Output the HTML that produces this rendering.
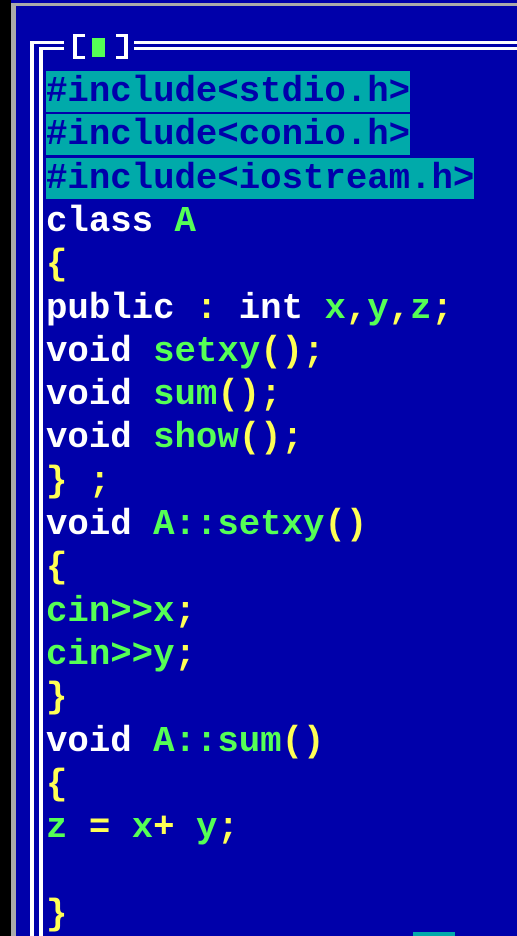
<!DOCTYPE html>
<html><head><meta charset="utf-8"><style>
html,body{margin:0;padding:0;}
body{width:517px;height:936px;background:#0000AA;position:relative;overflow:hidden;font-family:"Liberation Mono",monospace;}
.b{position:absolute;}
.r{position:absolute;left:46px;height:43.3px;line-height:43.3px;font-size:35.7px;font-weight:bold;white-space:pre;color:#fff;}
.h{background:#00AAAA;color:#0000AA;}
.g{color:#55FF55}.y{color:#FFFF55}.w{color:#fff}
</style></head><body>
<div class="b" style="left:0;top:0;width:11px;height:936px;background:#000"></div>
<div class="b" style="left:11px;top:3px;width:506px;height:3px;background:#aaa"></div>
<div class="b" style="left:11px;top:3px;width:5px;height:933px;background:#aaa"></div>
<div class="b" style="left:30px;top:41px;width:487px;height:3px;background:#fff"></div>
<div class="b" style="left:30px;top:41px;width:4px;height:895px;background:#fff"></div>
<div class="b" style="left:39px;top:47px;width:478px;height:3px;background:#fff"></div>
<div class="b" style="left:39px;top:47px;width:4px;height:889px;background:#fff"></div>
<div class="b" style="left:64px;top:33px;width:70px;height:26px;background:#0000AA"></div>
<div class="b" style="left:73px;top:34px;width:4px;height:25px;background:#fff"></div>
<div class="b" style="left:73px;top:34px;width:12px;height:3px;background:#fff"></div>
<div class="b" style="left:73px;top:56px;width:12px;height:3px;background:#fff"></div>
<div class="b" style="left:92px;top:38px;width:13px;height:19px;background:#55FF55"></div>
<div class="b" style="left:124px;top:34px;width:4px;height:25px;background:#fff"></div>
<div class="b" style="left:116px;top:34px;width:12px;height:3px;background:#fff"></div>
<div class="b" style="left:116px;top:56px;width:12px;height:3px;background:#fff"></div>
<div class="b" style="left:413px;top:932px;width:42px;height:4px;background:#00AAAA"></div>

<div class="r" style="top:70px"><span class="h">#include&lt;stdio.h&gt;</span></div>
<div class="r" style="top:113.3px"><span class="h">#include&lt;conio.h&gt;</span></div>
<div class="r" style="top:156.6px"><span class="h">#include&lt;iostream.h&gt;</span></div>
<div class="r" style="top:199.9px">class <span class="g">A</span></div>
<div class="r" style="top:243.2px"><span class="y">{</span></div>
<div class="r" style="top:286.5px">public <span class="y">:</span> int <span class="g">x</span><span class="y">,</span><span class="g">y</span><span class="y">,</span><span class="g">z</span><span class="y">;</span></div>
<div class="r" style="top:329.8px">void <span class="g">setxy</span><span class="y">();</span></div>
<div class="r" style="top:373.1px">void <span class="g">sum</span><span class="y">();</span></div>
<div class="r" style="top:416.4px">void <span class="g">show</span><span class="y">();</span></div>
<div class="r" style="top:459.7px"><span class="y">} ;</span></div>
<div class="r" style="top:503px">void <span class="g">A::setxy</span><span class="y">()</span></div>
<div class="r" style="top:546.3px"><span class="y">{</span></div>
<div class="r" style="top:589.6px"><span class="g">cin&gt;&gt;x</span><span class="y">;</span></div>
<div class="r" style="top:632.9px"><span class="g">cin&gt;&gt;y</span><span class="y">;</span></div>
<div class="r" style="top:676.2px"><span class="y">}</span></div>
<div class="r" style="top:719.5px">void <span class="g">A::sum</span><span class="y">()</span></div>
<div class="r" style="top:762.8px"><span class="y">{</span></div>
<div class="r" style="top:806.1px"><span class="g">z</span> <span class="y">=</span> <span class="g">x</span><span class="y">+</span> <span class="g">y</span><span class="y">;</span></div>
<div class="r" style="top:892.7px"><span class="y">}</span></div>
</body></html>
